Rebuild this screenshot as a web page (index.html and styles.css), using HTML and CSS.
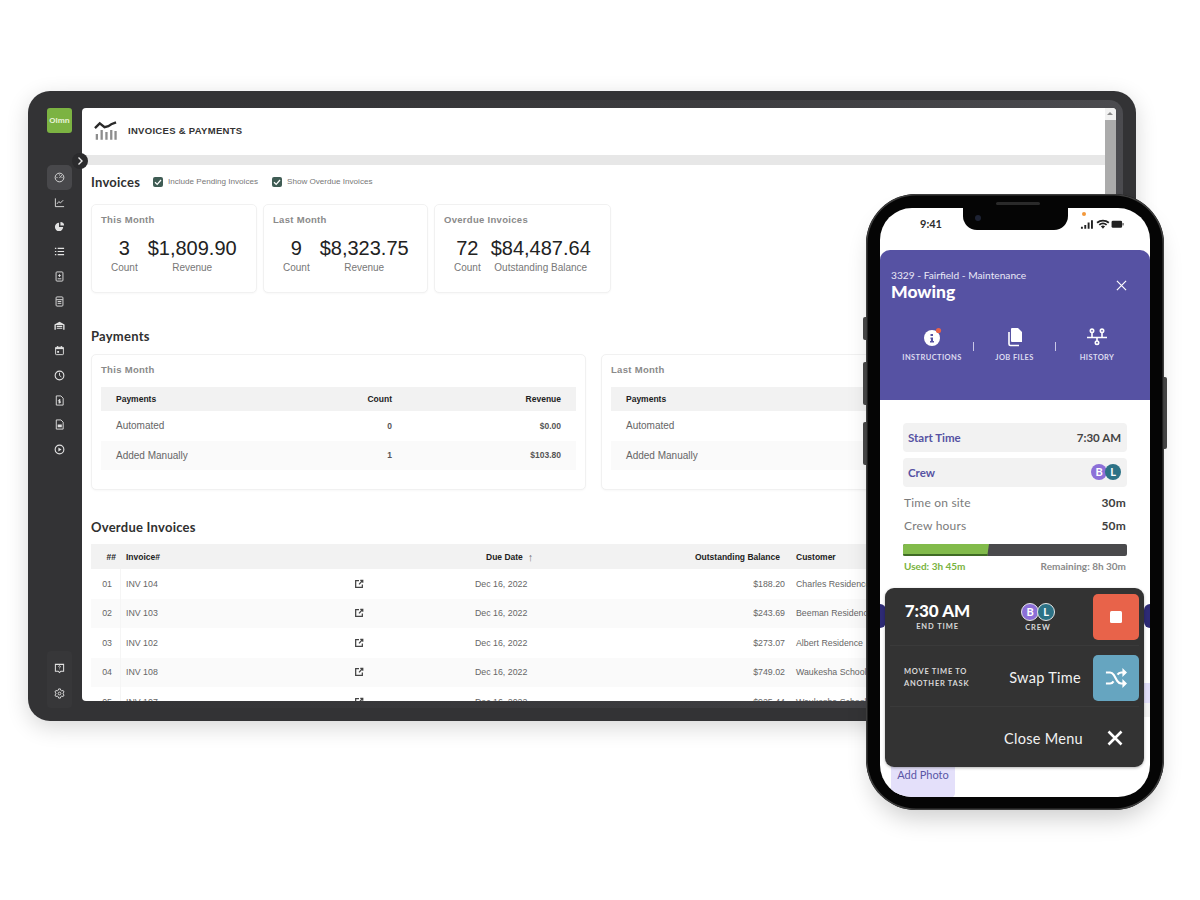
FILE: index.html
```html
<!DOCTYPE html>
<html lang="en">
<head>
<meta charset="utf-8">
<title>Invoices &amp; Payments</title>
<link rel="stylesheet" href="styles.css">
</head>
<body>
<div class="stage">

  <section class="tablet">
    <nav class="sidebar">
      <div class="logo">Olmn</div>
      <ul class="nav">
        <li class="nav-item active"><svg viewBox="0 0 24 24"><circle cx="12" cy="12" r="9.5"/><path d="M12 13l5-6M5.5 12h2M12 5.5v2M16.5 12h2"/></svg></li>
        <li class="nav-item"><svg viewBox="0 0 24 24"><path d="M3 3v18h19M6.5 15l4-5 3.5 3 6-6"/></svg></li>
        <li class="nav-item"><svg viewBox="0 0 24 24"><path class="fill" d="M11 4a9 9 0 1 0 9 9h-9z"/><path class="fill" d="M14 2a8 8 0 0 1 8 8h-8z"/></svg></li>
        <li class="nav-item"><svg viewBox="0 0 24 24"><path d="M8 5h14M8 12h14M8 19h14" stroke-width="2.6"/><path d="M2 5h3M2 12h3M2 19h3" stroke-width="2.6"/></svg></li>
        <li class="nav-item"><svg viewBox="0 0 24 24"><rect x="4.5" y="2" width="15" height="20" rx="2"/><path d="M12 7v6M9 10h6M8 17h8"/></svg></li>
        <li class="nav-item"><svg viewBox="0 0 24 24"><rect x="4.5" y="2" width="15" height="20" rx="2"/><path d="M5 8h14M8 12h8M8 16h8"/></svg></li>
        <li class="nav-item"><svg viewBox="0 0 24 24"><path class="fill" d="M1 10l11-6 11 6v11h-3V11H4v10H1z"/><path d="M6 14h12M6 18h12" stroke-width="2.4"/></svg></li>
        <li class="nav-item"><svg viewBox="0 0 24 24"><path class="fill" d="M3 5h18v4H3z"/><rect x="3.5" y="5" width="17" height="16" rx="1.5"/><path d="M8 2v4M16 2v4" stroke-width="2.4"/><path class="fill" d="M7 13h4v4H7z"/></svg></li>
        <li class="nav-item"><svg viewBox="0 0 24 24"><circle cx="12" cy="12" r="9.5" stroke-width="2.4"/><path d="M12 6v6l4 3"/></svg></li>
        <li class="nav-item"><svg viewBox="0 0 24 24"><path d="M5 2h10l5 5v15H5z"/><path d="M12 9v9M14.5 11h-3.500a1.500 1.500 0 0 0 0 3h2a1.500 1.500 0 0 1 0 3H9.500"/></svg></li>
        <li class="nav-item"><svg viewBox="0 0 24 24"><path d="M5 2h10l5 5v15H5z"/><path class="fill" d="M8 12h9v6H8z"/></svg></li>
        <li class="nav-item"><svg viewBox="0 0 24 24"><circle cx="12" cy="12" r="9.5" stroke-width="2.4"/><path class="fill" d="M9.5 7.500l7 4.500-7 4.500z"/></svg></li>
      </ul>
      <ul class="nav nav-bottom">
        <li class="nav-item"><svg viewBox="0 0 24 24"><path d="M3 3h18v15h-6l-3 3-3-3H3z" stroke-width="2.2"/><path d="M10 8a2 2 0 1 1 3 1.700c-.8.500-1 1-1 1.800M12 14v.5"/></svg></li>
        <li class="nav-item"><svg viewBox="0 0 24 24"><circle cx="12" cy="12" r="3"/><path d="M10 2h4l.7 3 2.300 1.300 3-.9 2 3.500-2.300 2.100v2l2.300 2.100-2 3.500-3-.9L14.700 19 14 22h-4l-.7-3L7 17.700l-3 .9-2-3.500L4.300 13v-2L2 8.900l2-3.500 3 .9L9.300 5z"/></svg></li>
      </ul>
    </nav>

    <div class="bezel">
      <button class="expander" type="button" aria-label="Expand"><svg viewBox="0 0 10 10"><path d="M3.500 1.500L7 5 3.500 8.500"/></svg></button>
      <div class="screen">
        <main class="screen-main">
          <header class="page-header">
            <svg class="header-icon" viewBox="0 0 24 20"><path class="line" d="M1 7l5-5 5 4 4-1 3-2 5-2"/><path class="bars" d="M3 13v6M8 9v10M13 11v8M18 9v10M22.500 10v9"/></svg>
            <h1 class="page-title">INVOICES &amp; PAYMENTS</h1>
          </header>
          <div class="band"></div>

          <div class="invoices-head">
            <h2 class="section-title">Invoices</h2>
            <label class="check"><span class="box"><svg viewBox="0 0 10 10"><path d="M2 5.200l2.200 2.200L8 3"/></svg></span>Include Pending Invoices</label>
            <label class="check"><span class="box"><svg viewBox="0 0 10 10"><path d="M2 5.200l2.200 2.200L8 3"/></svg></span>Show Overdue Invoices</label>
          </div>

          <div class="stat-cards">
            <article class="card stat-card">
              <h3 class="card-title">This Month</h3>
              <div class="stats">
                <div class="stat"><b>3</b><span>Count</span></div>
                <div class="stat"><b>$1,809.90</b><span>Revenue</span></div>
              </div>
            </article>
            <article class="card stat-card">
              <h3 class="card-title">Last Month</h3>
              <div class="stats">
                <div class="stat"><b>9</b><span>Count</span></div>
                <div class="stat"><b>$8,323.75</b><span>Revenue</span></div>
              </div>
            </article>
            <article class="card stat-card">
              <h3 class="card-title">Overdue Invoices</h3>
              <div class="stats">
                <div class="stat"><b>72</b><span>Count</span></div>
                <div class="stat"><b>$84,487.64</b><span>Outstanding Balance</span></div>
              </div>
            </article>
          </div>

          <h2 class="section-title payments-title">Payments</h2>
          <div class="pay-cards">
            <article class="card pay-card">
              <h3 class="card-title">This Month</h3>
              <div class="pay-row pay-head"><span>Payments</span><span class="num">Count</span><span class="num">Revenue</span></div>
              <div class="pay-row"><span class="name">Automated</span><span class="num">0</span><span class="num">$0.00</span></div>
              <div class="pay-row alt"><span class="name">Added Manually</span><span class="num">1</span><span class="num">$103.80</span></div>
            </article>
            <article class="card pay-card">
              <h3 class="card-title">Last Month</h3>
              <div class="pay-row pay-head"><span>Payments</span><span class="num">Count</span><span class="num">Revenue</span></div>
              <div class="pay-row"><span class="name">Automated</span><span class="num">0</span><span class="num">$0.00</span></div>
              <div class="pay-row alt"><span class="name">Added Manually</span><span class="num">1</span><span class="num">$103.80</span></div>
            </article>
          </div>

          <h2 class="section-title overdue-title">Overdue Invoices</h2>
          <div class="table">
            <div class="t-row t-head"><span class="c-no">##</span><span class="c-inv">Invoice#</span><span class="c-date">Due Date <i class="arrow">↑</i></span><span class="c-bal">Outstanding Balance</span><span class="c-cust">Customer</span></div>
            <div class="t-row"><span class="c-no">01</span><span class="c-inv">INV 104<svg class="ext" viewBox="0 0 12 12"><path d="M6 2H2v8h8V6.500M6 6.500L10.500 1.500M7.500 1.500h3v3"/></svg></span><span class="c-date">Dec 16, 2022</span><span class="c-bal">$188.20</span><span class="c-cust">Charles Residence</span></div>
            <div class="t-row alt"><span class="c-no">02</span><span class="c-inv">INV 103<svg class="ext" viewBox="0 0 12 12"><path d="M6 2H2v8h8V6.500M6 6.500L10.500 1.500M7.500 1.500h3v3"/></svg></span><span class="c-date">Dec 16, 2022</span><span class="c-bal">$243.69</span><span class="c-cust">Beeman Residence</span></div>
            <div class="t-row"><span class="c-no">03</span><span class="c-inv">INV 102<svg class="ext" viewBox="0 0 12 12"><path d="M6 2H2v8h8V6.500M6 6.500L10.500 1.500M7.500 1.500h3v3"/></svg></span><span class="c-date">Dec 16, 2022</span><span class="c-bal">$273.07</span><span class="c-cust">Albert Residence</span></div>
            <div class="t-row alt"><span class="c-no">04</span><span class="c-inv">INV 108<svg class="ext" viewBox="0 0 12 12"><path d="M6 2H2v8h8V6.500M6 6.500L10.500 1.500M7.500 1.500h3v3"/></svg></span><span class="c-date">Dec 16, 2022</span><span class="c-bal">$749.02</span><span class="c-cust">Waukesha School</span></div>
            <div class="t-row"><span class="c-no">05</span><span class="c-inv">INV 107<svg class="ext" viewBox="0 0 12 12"><path d="M6 2H2v8h8V6.500M6 6.500L10.500 1.500M7.500 1.500h3v3"/></svg></span><span class="c-date">Dec 16, 2022</span><span class="c-bal">$925.44</span><span class="c-cust">Waukesha School</span></div>
          </div>
        </main>
        <div class="scrollbar"><span class="scroll-up"></span><span class="scroll-thumb"></span></div>
      </div>
    </div>
  </section>

  <section class="phone">
    <span class="side-btn left b1"></span>
    <span class="side-btn left b2"></span>
    <span class="side-btn left b3"></span>
    <span class="side-btn right b4"></span>
    <span class="speaker"></span>
    <div class="phone-screen">
      <div class="notch"><span class="camera"></span></div>
      <span class="orange-dot"></span>
      <div class="status">
        <span class="clock">9:41</span>
        <svg class="status-icons" viewBox="0 0 46 10">
          <path d="M1 8h2v2H1zM4.500 6h2v4h-2zM8 3.500h2V10H8zM11.500 1h2v9h-2z"/>
          <path d="M24 10l-2.200-2.600a3.400 3.400 0 0 1 4.400 0zM19.500 5.200l1.300 1.400a5 5 0 0 1 6.400 0l1.300-1.400a7 7 0 0 0-9 0zM17.200 3l1.300 1.400a8.400 8.400 0 0 1 11 0L30.800 3a10.500 10.500 0 0 0-13.600 0z"/>
          <rect x="33" y="1.500" width="11" height="7.500" rx="1.500"/><rect x="44.500" y="4" width="1" height="2.500"/>
        </svg>
      </div>

      <header class="job-head">
        <div class="job-top">
          <div>
            <p class="job-sub">3329 - Fairfield - Maintenance</p>
            <h2 class="job-title">Mowing</h2>
          </div>
          <svg class="job-close" viewBox="0 0 12 12"><path d="M1 1l10 10M11 1L1 11"/></svg>
        </div>
        <div class="job-tabs">
          <div class="job-tab">
            <span class="tab-icon">
              <svg viewBox="0 0 20 20"><circle class="w" cx="10" cy="11" r="8"/><path class="p" d="M8.500 7h2.500v2H8.500zM8.500 10.500h2.500V14H12v1.500H8V14h.9v-2H8.500z"/><circle class="red" cx="16.500" cy="3.500" r="2.600"/></svg>
            </span>
            <span class="tab-label">INSTRUCTIONS</span>
          </div>
          <span class="tab-div"></span>
          <div class="job-tab">
            <span class="tab-icon">
              <svg viewBox="0 0 20 20"><path class="w" d="M7 1h6l4 4v10H7a1 1 0 0 1-1-1V2a1 1 0 0 1 1-1z"/><path class="wl" d="M4 5v12a1.500 1.500 0 0 0 1.500 1.500H14"/></svg>
            </span>
            <span class="tab-label">JOB FILES</span>
          </div>
          <span class="tab-div"></span>
          <div class="job-tab">
            <span class="tab-icon">
              <svg viewBox="0 0 20 20"><path class="wl" d="M0 10.500h20M5 5.500v5M15 5.500v5M10 10.500v3.500"/><circle class="wl" cx="5" cy="3.800" r="1.700"/><circle class="wl" cx="15" cy="3.800" r="1.700"/><circle class="wl" cx="10" cy="15.700" r="1.700"/></svg>
            </span>
            <span class="tab-label">HISTORY</span>
          </div>
        </div>
      </header>

      <div class="job-body">
        <div class="pill"><span class="pill-label">Start Time</span><span class="pill-value">7:30 AM</span></div>
        <div class="pill"><span class="pill-label">Crew</span><span class="avatars"><span class="av av-b">B</span><span class="av av-l">L</span></span></div>
        <div class="kv"><span>Time on site</span><b>30m</b></div>
        <div class="kv"><span>Crew hours</span><b>50m</b></div>
        <div class="progress"><span class="progress-fill"></span></div>
        <div class="progress-text"><span class="used">Used: 3h 45m</span><span class="remain">Remaining: 8h 30m</span></div>
        <div class="add-photo">Add Photo</div>
      </div>

      <span class="blob blob-l"></span>
      <span class="blob blob-r"></span>
      <span class="peek"></span>

      <div class="menu">
        <div class="menu-row r1">
          <div class="end-time"><b>7:30 AM</b><span>END TIME</span></div>
          <div class="menu-crew">
            <span class="avatars"><span class="av av-b ring">B</span><span class="av av-l ring">L</span></span>
            <span>CREW</span>
          </div>
          <button class="square red-btn" type="button" aria-label="Stop"><span class="stop"></span></button>
        </div>
        <div class="menu-row r2">
          <div class="move"><span>MOVE TIME TO</span><span>ANOTHER TASK</span></div>
          <span class="menu-action">Swap Time</span>
          <button class="square blue-btn" type="button" aria-label="Swap">
            <svg viewBox="0 0 24 24"><path d="M1 6h4.500c2 0 3 1 4 2.500l4 7c1 1.500 2 2.500 4 2.500H20M1 18h4.500c2 0 3-1 3.800-2.300M13.700 8.300C14.500 7 15.500 6 17.500 6H20"/><path class="head" d="M19 1l5 5-5 5zM19 13l5 5-5 5z"/></svg>
          </button>
        </div>
        <div class="menu-row r3">
          <span class="menu-action">Close Menu</span>
          <svg class="menu-x" viewBox="0 0 16 16"><path d="M1.500 1.500l13 13M14.500 1.500l-13 13"/></svg>
        </div>
      </div>
    </div>
  </section>
</div>
</body>
</html>
```
FILE: styles.css
```css
* { box-sizing: border-box; }
html, body { margin: 0; padding: 0; background: #fff; }
body { font-family: "Liberation Sans", Arial, sans-serif; }
h1, h2, h3, p, ul { margin: 0; padding: 0; }
ul { list-style: none; }
button { border: 0; padding: 0; font: inherit; }

.stage { position: relative; width: 1200px; height: 900px; overflow: hidden; background: #fff; }

/* Tablet */
.tablet {
  position: absolute; left: 28px; top: 91px; width: 1108px; height: 630px;
  display: flex; padding: 9px 13px 13px 0;
  background: #333335; border-radius: 22px;
  box-shadow: 0 6px 22px rgba(0,0,0,.16);
}
.sidebar { width: 54px; flex: none; display: flex; flex-direction: column; align-items: center; padding: 8px 0 0 9px; }
.logo {
  width: 25px; height: 25px; border-radius: 3px; background: #7cb342; color: #e8f3d8;
  font-size: 8px; font-weight: 700; line-height: 25px; text-align: center; margin-bottom: 32px;
}
.nav { display: flex; flex-direction: column; }
.nav-item { width: 25px; height: 24.75px; display: flex; align-items: center; justify-content: center; }
.nav-item.active { background: #48484b; border-radius: 5px; }
.nav-item svg { width: 11px; height: 11px; fill: none; stroke: #e2e2e2; stroke-width: 2; }
.nav-item svg .fill { fill: #e2e2e2; stroke: none; }
.nav-bottom { margin-top: auto; padding: 6px 0 2px; background: #373739; border-radius: 4px; }

.bezel {
  position: relative; flex: 1; display: flex; min-width: 0;
  padding: 8px 7px 7px 0;
  background: linear-gradient(to right, #333335 0%, #3c3c3f 60%, #4b4b4f 100%);
  border-radius: 0 14px 4px 0;
}
.expander {
  position: absolute; left: -10px; top: 53px; width: 16px; height: 16px; z-index: 2;
  border-radius: 50%; background: #2b2b2d; display: flex; align-items: center; justify-content: center;
}
.expander svg { width: 10px; height: 10px; fill: none; stroke: #eee; stroke-width: 1.4; }

.screen { flex: 1; min-width: 0; display: flex; background: #fff; border-radius: 4px; overflow: hidden; }
.screen-main { flex: 1; min-width: 0; overflow: hidden; }
.scrollbar { width: 11px; flex: none; display: flex; flex-direction: column; background: #f0f0f0; }
.scroll-up { height: 12px; background: #f1f1f1; position: relative; }
.scroll-up::after {
  content: ""; position: absolute; left: 2px; top: 4px;
  border-left: 3.5px solid transparent; border-right: 3.5px solid transparent; border-bottom: 3.5px solid #8b8b8b;
}
.scroll-thumb { flex: 1; background: #ababab; }

.page-header { height: 47px; display: flex; align-items: center; padding: 0 0 2px 12px; }
.header-icon { width: 23px; height: 20px; flex: none; fill: none; }
.header-icon .line { stroke: #2a2a2a; stroke-width: 2.4; }
.header-icon .bars { stroke: #8d8d8d; stroke-width: 2.4; }
.page-title { margin-left: 11px; font-size: 9.5px; font-weight: 700; color: #333; letter-spacing: .3px; }
.band { height: 10px; background: #e7e7e7; }

.section-title { font-family: Lato, "Liberation Sans", sans-serif; font-size: 13px; font-weight: 700; color: #303030; letter-spacing: .25px; line-height: 16px; }
.invoices-head { display: flex; align-items: center; height: 16px; margin: 9px 0 14px 9px; }
.check { display: flex; align-items: center; font-size: 8.1px; color: #777; margin-top: -1px; }
.invoices-head .section-title { width: 62px; }
.check + .check { margin-left: 14px; }
.box { width: 10px; height: 10px; margin-right: 5px; background: #3f5c54; border-radius: 2px; display: flex; flex: none; }
.box svg { width: 10px; height: 10px; fill: none; stroke: #fff; stroke-width: 1.3; }

.card { background: #fff; border: 1px solid #f1f1f1; border-radius: 5px; box-shadow: 0 1px 2px rgba(0,0,0,.03); flex: none; }
.card-title { font-size: 9.5px; font-weight: 700; color: #8a8a8a; letter-spacing: .3px; line-height: 12px; }

.stat-cards { display: flex; gap: 6px; margin-left: 9px; }
.stat-card { height: 89px; padding: 9px 9px 0; }
.stats { display: flex; gap: 10px; padding: 10px 10px 0; }
.stat-card:nth-child(2) { width: 165px; }
.stat-card:first-child { width: 166px; }
.stat-card:nth-child(3) { width: 177px; }
.stat { display: flex; flex-direction: column; align-items: center; }
.stat b { font-weight: 400; font-size: 20px; line-height: 24px; color: #222; }
.stat span { font-size: 10px; line-height: 15px; color: #777; }

.payments-title { margin: 35px 0 10px 9px; }
.pay-cards { display: flex; gap: 15px; margin-left: 9px; }
.pay-card { width: 495px; height: 136px; padding: 9px 9px 0; }
.pay-card .card-title { margin-bottom: 11px; }
.pay-row { display: grid; grid-template-columns: 1fr 120px 169px; align-items: center; height: 29.5px; padding: 0 15px; font-size: 8.5px; font-weight: 700; color: #555; }
.pay-row .name { font-size: 10px; font-weight: 400; color: #666; }
.pay-row.alt { background: #fafafa; }
.pay-head { height: 24px; background: #f2f2f2; color: #222; }
.num { text-align: right; }

.overdue-title { margin: 29px 0 9px 9px; }
.table { margin-left: 9px; }
.t-row { display: grid; grid-template-columns: 30px 249px 270px 150px 1fr; align-items: center; height: 29.5px; font-size: 8.8px; color: #666; }
.t-row.alt { background: #fafafa; }
.t-row > span { height: 100%; display: flex; align-items: center; white-space: nowrap; }
.t-head { height: 25px; background: #f2f2f2; color: #222; font-weight: 700; font-size: 8.5px; }
.c-no { justify-content: flex-end; padding-right: 5px; }
.t-row:not(.t-head) .c-no { border-right: 1px solid #f5f5f5; padding-right: 8px; }
.c-inv { padding-left: 5px; justify-content: space-between; padding-right: 6px; }
.c-date { padding-left: 105px; }
.t-head .c-date { padding-left: 116px; }
.arrow { font-style: normal; font-weight: 400; font-size: 11px; margin-left: 5px; color: #777; }
.c-bal { justify-content: flex-end; padding-right: 5px; }
.t-head .c-bal { padding-right: 10px; }
.c-cust { padding-left: 6px; }
.ext { width: 10px; height: 10px; fill: none; stroke: #444; stroke-width: 1.5; }

/* Phone */
.phone {
  position: absolute; left: 866px; top: 194px; width: 298px; height: 616px; padding: 14px 14px 13px;
  background: #050505; border-radius: 50px;
  box-shadow: inset 0 0 0 1.5px #3d3d3d, 0 14px 24px -6px rgba(0,0,0,.2);
  font-family: Lato, "Liberation Sans", sans-serif;
}
.side-btn { position: absolute; width: 3px; background: #444; }
.side-btn.left { left: -3px; border-radius: 2px 0 0 2px; }
.side-btn.right { right: -3px; border-radius: 0 2px 2px 0; }
.b1 { top: 123px; height: 23px; }
.b2 { top: 168px; height: 43px; }
.b3 { top: 228px; height: 43px; }
.b4 { top: 183px; height: 72px; }
.speaker { position: absolute; left: 130px; top: 8px; width: 44px; height: 3px; background: #2a2a2a; border-radius: 2px; z-index: 3; }

.phone-screen { position: relative; height: 100%; background: #fff; border-radius: 32px; overflow: hidden; display: flex; flex-direction: column; }
.notch { position: absolute; left: 83px; top: 0; width: 105px; height: 22px; background: #050505; border-radius: 0 0 14px 14px; z-index: 2; }
.camera { position: absolute; left: 12px; top: 7px; width: 6px; height: 6px; border-radius: 50%; background: #1d2233; }
.orange-dot { position: absolute; left: 202px; top: 4px; width: 4px; height: 4px; border-radius: 50%; background: #f2983a; }
.status { height: 42px; flex: none; display: flex; justify-content: space-between; align-items: flex-start; padding: 9px 26px 0 40px; }
.clock { font-size: 11px; font-weight: 700; color: #2c2c2c; line-height: 14px; }
.status-icons { width: 44px; height: 10px; margin-top: 2px; fill: #222; }

.job-head { height: 150px; flex: none; background: #5652a3; border-radius: 10px 10px 0 0; color: #fff; padding: 19px 23px 0 11px; }
.job-top { display: flex; justify-content: space-between; align-items: center; }
.job-sub { font-size: 10.2px; line-height: 13px; color: #e9e8f6; }
.job-title { font-size: 17.5px; font-weight: 900; line-height: 19px; }
.job-close { width: 11px; height: 11px; fill: none; stroke: #fff; stroke-width: 1.3; }
.job-tabs { display: flex; align-items: flex-start; margin: 26px 0 0 10px; }
.job-tab { width: 62px; display: flex; flex-direction: column; align-items: center; flex: none; }
.tab-icon { width: 20px; height: 20px; }
.tab-icon svg { width: 20px; height: 20px; display: block; }
.tab-icon .w { fill: #fff; }
.tab-icon .p { fill: #5652a3; }
.tab-icon .red { fill: #e8634a; }
.tab-icon .wl { fill: none; stroke: #fff; stroke-width: 1.6; }
.tab-label { margin-top: 6px; font-size: 7.5px; font-weight: 700; letter-spacing: .4px; color: #dcdbef; white-space: nowrap; line-height: 9px; }
.tab-div { width: 1px; height: 9px; margin: 15px 10px 0 9.5px; background: #c9c7e6; flex: none; }

.job-body { padding: 23px 23px 0; flex: 1; }
.pill { height: 29px; background: #f2f2f2; border-radius: 4px; display: flex; align-items: center; justify-content: space-between; padding: 0 6px 1px 5px; margin-bottom: 6px; font-size: 11.5px; }
.pill-label { color: #5652a3; font-weight: 700; }
.pill-value { color: #444; font-weight: 700; }
.avatars { display: flex; }
.av { width: 16px; height: 16px; border-radius: 50%; color: #fff; font-size: 11px; font-weight: 700; text-align: center; line-height: 16px; }
.av + .av { margin-left: -2px; }
.av-b { background: #8c6fd8; }
.av-l { background: #2d7286; }
.kv { display: flex; justify-content: space-between; padding: 0 1px 0 1px; height: 23px; align-items: center; font-size: 12px; letter-spacing: .2px; color: #7b7b7b; }
.pill + .kv { margin-top: -2px; }
.kv b { color: #3e3e3e; font-weight: 700; }
.progress { height: 12px; margin-top: 7px; background: #4a4a4c; border-radius: 2px; overflow: hidden; }
.progress-fill { display: block; width: 86px; height: 100%; background: #82bb4b; box-shadow: inset 0 -2px 0 #3f6b25; clip-path: polygon(0 0, 100% 0, 98% 100%, 0 100%); }
.progress-text { display: flex; justify-content: space-between; margin-top: 4px; padding: 0 1px; font-size: 10px; font-weight: 700; line-height: 13px; }
.used { color: #79b340; }
.remain { color: #8a8a8a; }
.add-photo { width: 64px; height: 38px; margin: 187px 0 0 -12px; padding-top: 8px; background: #e4e0fa; border-radius: 5px; font-size: 11px; color: #5a56a6; text-align: center; }

.blob { position: absolute; top: 396px; width: 6px; height: 24px; background: #2d2a75; }
.blob-l { left: 0; border-radius: 0 12px 12px 0; }
.blob-r { right: 0; border-radius: 12px 0 0 12px; }
.peek { position: absolute; right: 0; top: 475px; width: 6px; height: 34px; background: linear-gradient(#e0ddf7 0 60%, #f2f2f2 60%); }

.menu {
  position: absolute; left: 5px; top: 380px; width: 259px; height: 179px; z-index: 1;
  background: #333; border-radius: 9px; box-shadow: 0 1px 3px rgba(0,0,0,.3); color: #fff;
  display: flex; flex-direction: column; padding: 0 5px;
}
.menu-row { display: flex; align-items: center; }
.r1 { height: 58px; border-bottom: 1px solid #3a3a3a; }
.r2 { height: 61px; border-bottom: 1px solid #3a3a3a; padding-top: 3px; }
.r3 { flex: 1; justify-content: flex-end; padding: 2px 16px 0 0; }
.end-time { margin-left: 14px; width: 67px; display: flex; flex-direction: column; align-items: center; }
.end-time b { font-size: 17px; font-weight: 900; line-height: 18px; white-space: nowrap; }
.end-time span, .menu-crew > span:last-child { font-size: 7.5px; letter-spacing: .9px; color: #d9d9d9; line-height: 10px; font-weight: 700; margin-top: 2px; white-space: nowrap; }
.menu-crew { margin-left: 50px; margin-top: 2px; display: flex; flex-direction: column; align-items: center; width: 34px; }
.menu-crew .av { width: 18px; height: 18px; line-height: 16px; border: 1px solid #e6e6e6; }
.square { width: 46px; height: 46px; border-radius: 5px; margin-left: auto; flex: none; display: flex; align-items: center; justify-content: center; }
.red-btn { background: #e8634a; }
.stop { width: 12px; height: 12px; background: #fff; border-radius: 1.5px; }
.blue-btn { background: #66a5c0; }
.blue-btn svg { width: 22px; height: 22px; fill: none; stroke: #fff; stroke-width: 2.4; }
.blue-btn .head { fill: #fff; stroke: none; }
.move { margin-left: 14px; display: flex; flex-direction: column; font-size: 7.5px; font-weight: 700; letter-spacing: .75px; line-height: 11.5px; color: #d9d9d9; }
.menu-action { font-size: 14.5px; letter-spacing: .3px; color: #f2f2f2; white-space: nowrap; }
.r2 .menu-action { margin-left: auto; margin-right: 12px; }
.r2 .square { margin-left: 0; }
.menu-x { width: 16px; height: 16px; margin-left: 24px; fill: none; stroke: #fff; stroke-width: 2.6; }
```
